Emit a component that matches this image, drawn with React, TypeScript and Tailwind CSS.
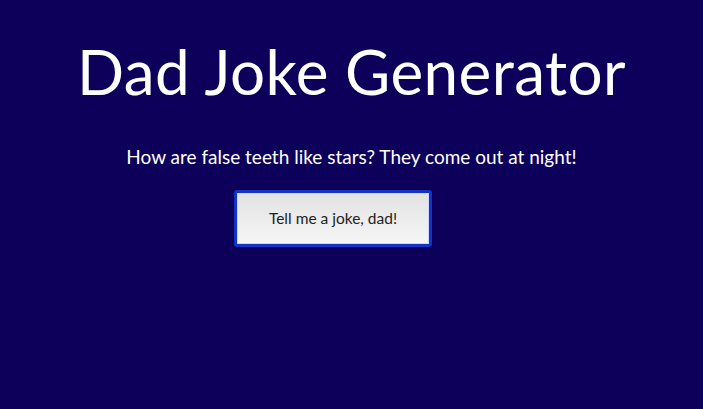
export default function App() {
  return (
    <div className="min-h-screen w-full bg-[#0d005b] text-white font-['Lato','Noto_Sans',sans-serif]">
      <div className="pt-[35px] flex flex-col">
        <h1 className="text-center text-[62px] leading-[72px] font-normal tracking-[0.4px]">
          Dad Joke Generator
        </h1>
        <p className="mt-[37px] text-center text-[19px] leading-[26px]">
          How are false teeth like stars? They come out at night!
        </p>
        <div className="mt-[20px] pl-[234px]">
          <button className="w-[198px] h-[57px] rounded-[3px] border-[3px] border-[#1234c4] bg-gradient-to-b from-[#e2e2e2] to-[#f6f6f6] text-[15.5px] text-[#222] shadow-[inset_0_0_0_1px_#c9d4ff]">
            Tell me a joke, dad!
          </button>
        </div>
      </div>
    </div>
  );
}
